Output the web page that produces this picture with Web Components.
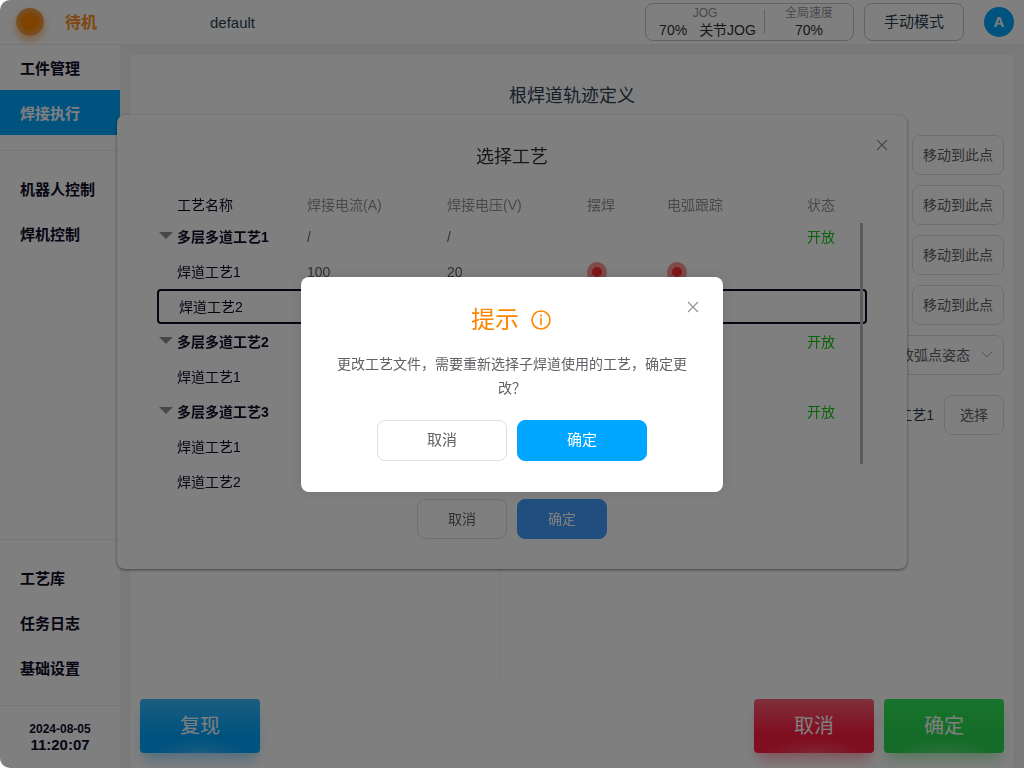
<!DOCTYPE html>
<html lang="zh-CN">
<head>
<meta charset="utf-8">
<title>焊接执行</title>
<style>
  html, body { margin: 0; height: 100%; }
  body {
    background: #fff;
    color: #2c3e50;
    font: 14px/20px "Liberation Sans", "Noto Sans CJK SC", sans-serif;
    overflow: hidden;
  }
</style>
</head>
<body>
<weld-app>
  <top-bar slot="header" state="待机" project="default" user="A"></top-bar>
  <side-nav slot="nav"></side-nav>
  <track-panel heading="根焊道轨迹定义"></track-panel>
  <craft-dialog slot="dialog" heading="选择工艺"></craft-dialog>
  <confirm-dialog slot="prompt" heading="提示">更改工艺文件，需要重新选择子焊道使用的工艺，确定更改？</confirm-dialog>
</weld-app>

<script>
class BaseElement extends HTMLElement {

    constructor(){
        super()
        this.attachShadow({mode : 'open'})
    }

    connectedCallback(){
        const contentNode = document.createElement('template')
        contentNode.innerHTML = `
        <style>
            * { box-sizing: border-box; }
            button, select { font: inherit; color: inherit; margin: 0; cursor: pointer; }
            h1, h2, p { margin: 0; font-weight: normal; }
            ${this.getStyles()}
        </style>
        ${this.getTemplate()}`
        this.shadowRoot.appendChild(contentNode.content.cloneNode(true))
    }
}

class WeldApp extends BaseElement {
    getStyles(){
        return `
            :host {
                display: flex;
                flex-direction: column;
                height: 100vh;
                background: #f2f2f2;
                border-radius: 10px 0 0 10px;
                overflow: hidden;
            }
            .body { display: flex; flex: 1; min-height: 0; }
            main { flex: 1; display: flex; padding: 10px 10px 0; min-width: 0; }
            .layer { position: fixed; inset: 0; display: flex; justify-content: center; }
            .top { align-items: flex-start; padding-top: 15vh; }
            .mask {
                align-items: center;
                background: rgba(0, 0, 0, 0.5);
                border-radius: 10px 0 0 10px;
            }
        `
    }
    getTemplate(){
        return `
            <slot name="header"></slot>
            <div class="body">
                <slot name="nav"></slot>
                <main><slot></slot></main>
            </div>
            <div class="layer top"><slot name="dialog"></slot></div>
            <div class="layer mask"><slot name="prompt"></slot></div>
        `
    }
}

class TopBar extends BaseElement {
    getStyles(){
        return `
            :host {
                display: block;
                background: #fff;
                border-bottom: 1px solid #eee;
            }
            header {
                display: flex;
                align-items: center;
                height: 44px;
                padding: 0 10px 0 16px;
            }
            .lamp {
                width: 28px;
                height: 28px;
                border-radius: 50%;
                background: radial-gradient(circle, #ff8400 7px, #f98f1c 9px, #eda257 14px);
                box-shadow: 0 4px 8px #ffb878;
            }
            .state, .project { padding-top: 2px; }
            .state { width: 145px; margin-left: 21px; font-size: 16px; font-weight: bold; color: #ff8d1a; }
            .project { flex: 1; font-size: 15px; }
            .box {
                display: flex;
                height: 38px;
                border: 1px solid #c4c4cc;
                border-radius: 8px;
                background: none;
            }
            .speed { width: 209px; align-items: center; color: #303133; line-height: 17px; text-align: center; }
            .jog { width: 118px; }
            .jog div { display: flex; gap: 12px; justify-content: center; padding-left: 5px; }
            .global {
                display: flex;
                flex: 1;
                flex-direction: column;
                justify-content: center;
                height: 24px;
                border-left: 1px solid #c0c4cc;
                line-height: 17px;
            }
            small { display: block; font-size: 12px; color: #909399; }
            .mode { width: 100px; margin-left: 10px; align-items: center; justify-content: center; font-size: 15px; }
            .user {
                width: 30px;
                height: 30px;
                margin-left: 20px;
                padding: 0;
                border: 0;
                border-radius: 50%;
                background: #00a6ff;
                color: #fff;
                font-size: 15px;
                font-weight: bold;
            }
        `
    }
    getTemplate(){
        return `
            <header>
                <span class="lamp"></span>
                <span class="state">${this.getAttribute('state')}</span>
                <span class="project">${this.getAttribute('project')}</span>
                <div class="box speed">
                    <div class="jog"><small>JOG</small><div><span>70%</span><span>关节JOG</span></div></div>
                    <div class="global"><small>全局速度</small><span>70%</span></div>
                </div>
                <button class="box mode">手动模式</button>
                <button class="user">${this.getAttribute('user')}</button>
            </header>
        `
    }
}

class SideNav extends BaseElement {
    getStyles(){
        return `
            :host { display: block; flex: none; width: 120px; background: #fff; }
            nav { display: flex; flex-direction: column; height: 100%; }
            .group { padding: 15px 0; border-bottom: 1px solid #eee; }
            .group:first-child { padding-top: 0; }
            .grow { flex: 1; }
            a {
                display: block;
                padding: 2px 0 0 20px;
                font-size: 15px;
                font-weight: bold;
                line-height: 43px;
                color: #0c0c26;
                text-decoration: none;
            }
            a.active { background: #00a6ff; color: #fff; }
            time {
                height: 62px;
                padding-top: 15px;
                text-align: center;
                font-size: 12px;
                font-weight: bold;
                line-height: 16px;
                color: #0c0c26;
            }
            time b { display: block; font-size: 15px; }
        `
    }
    getTemplate(){
        const groups = [
            ['工件管理', '焊接执行'],
            ['机器人控制', '焊机控制'],
            ['工艺库', '任务日志', '基础设置']
        ]
        return `
            <nav>
                ${groups.map((items, i) => `
                <div class="group ${i === 1 ? 'grow' : ''}">
                    ${items.map(item => `<a href="#" class="${item === '焊接执行' ? 'active' : ''}">${item}</a>`).join('')}
                </div>`).join('')}
                <time>2024-08-05<b>11:20:07</b></time>
            </nav>
        `
    }
}

class TrackPanel extends BaseElement {
    getStyles(){
        return `
            :host { display: flex; flex-direction: column; flex: 1; background: #fff; padding: 0 10px 15px; }
            h1 { padding: 31px 0 29px; font-size: 18px; line-height: 20px; text-align: center; }
            .content { display: flex; flex: 1; }
            .view { width: 361px; margin-bottom: 20px; border-right: 1px solid #eee; }
            .points { flex: 1; display: flex; flex-direction: column; align-items: flex-end; gap: 10px; }
            .points button, select {
                height: 40px;
                padding: 0 10px;
                border: 1px solid #dcdfe6;
                border-radius: 8px;
                background: none;
                color: #606266;
            }
            .select { position: relative; }
            select { appearance: none; width: 115px; }
            .select svg { position: absolute; right: 11px; top: 14px; pointer-events: none; }
            .craft { display: flex; align-items: center; gap: 10px; margin-top: 10px; }
            .craft button { width: 60px; }
            footer { display: flex; gap: 10px; }
            footer button {
                width: 120px;
                height: 54px;
                border: 0;
                border-radius: 4px;
                background:
                    radial-gradient(ellipse 50px 14px at 50% 100%, rgba(255, 255, 255, 0.2), transparent),
                    linear-gradient(var(--from), var(--to) 65%);
                box-shadow: 0 10px 12px -4px var(--glow);
                color: #fff;
                font-size: 20px;
            }
            .replay { margin-right: auto; --from: #38b9ff; --to: #00a6ff; --glow: #9fdcff; }
            .cancel { --from: #ff5f78; --to: #ff1c40; --glow: #ffa5b3; }
            .ok { --from: #2fe858; --to: #2ad850; --glow: #aaf0b9; }
        `
    }
    getTemplate(){
        return `
            <h1>${this.getAttribute('heading')}</h1>
            <div class="content">
                <div class="view"></div>
                <div class="points">
                    ${'<button>移动到此点</button>'.repeat(4)}
                    <div class="select">
                        <select aria-label="姿态"><option>收弧点姿态</option></select>
                        <svg width="12" height="12" viewBox="0 0 12 12" fill="none" stroke="#a8abb2"><path d="M1 3l5 5 5-5"/></svg>
                    </div>
                    <div class="craft"><span>工艺1</span><button>选择</button></div>
                </div>
            </div>
            <footer>
                <button class="replay">复现</button>
                <button class="cancel">取消</button>
                <button class="ok">确定</button>
            </footer>
        `
    }
}

// close cross in the corner of both dialogs
class CloseButton extends BaseElement {
    getStyles(){
        return `
            :host { position: absolute; top: 20px; right: 20px; }
            button { display: flex; padding: 4px; border: 0; background: none; }
        `
    }
    getTemplate(){
        return `
            <button aria-label="关闭">
                <svg width="12" height="12" viewBox="0 0 12 12" fill="none" stroke="#909399" stroke-width="1.2"><path d="M1 1l10 10M11 1L1 11"/></svg>
            </button>
        `
    }
}

const dialogButtons = `
    .actions { display: flex; justify-content: center; gap: 10px; }
    .actions button {
        width: 90px;
        height: 40px;
        padding: 0;
        border: 1px solid #dcdfe6;
        border-radius: 8px;
        background: #fff;
        color: #606266;
    }
    .actions .primary { border-color: #409eff; background: #409eff; color: #fff; }
`

class CraftDialog extends BaseElement {
    getStyles(){
        return `
            :host {
                display: block;
                position: relative;
                width: 790px;
                padding: 32px 40px 30px;
                box-sizing: border-box;
                background: #fff;
                border-radius: 8px;
                box-shadow: 0 1px 3px rgba(0, 0, 0, 0.5);
            }
            close-button { right: 15px; }
            h2 { font-size: 18px; line-height: 20px; text-align: center; color: #303133; }
            .list { position: relative; margin-top: 22px; }
            .bar { position: absolute; top: 34px; right: 4px; width: 3px; height: 241px; background: #b8b8b8; }
            table { width: 100%; table-layout: fixed; border-spacing: 0; color: #606266; }
            th, td { height: 35px; padding: 0; text-align: left; font-weight: normal; }
            thead th { height: 30px; padding-top: 2px; color: #909399; }
            th:first-child { padding-left: 20px; color: #0c0c26; }
            .parent th { font-weight: bold; }
            .parent th::before {
                content: '';
                float: left;
                margin: 5px 0 0 -18px;
                border: 7px solid transparent;
                border-top-color: #909090;
                border-bottom: 0;
            }
            tr.selected { outline: 2px solid #0c0c26; outline-offset: -2px; border-radius: 4px; }
            tr.selected th { padding-left: 22px; }
            .open { color: #10c810; }
            .dot {
                display: block;
                width: 20px;
                height: 20px;
                border: 5px solid #ff9494;
                border-radius: 50%;
                background: #ff3030;
            }
            ${dialogButtons}
        `
    }
    getRow(row){
        const dot = row.dots ? '<span class="dot"></span>' : ''
        return `
            <tr class="${row.parent ? 'parent' : ''} ${row.selected ? 'selected' : ''}">
                <th scope="row">${row.name}</th>
                <td>${row.current || ''}</td>
                <td>${row.voltage || ''}</td>
                <td>${dot}</td>
                <td>${dot}</td>
                <td class="open">${row.parent ? '开放' : ''}</td>
            </tr>
        `
    }
    getTemplate(){
        const rows = [
            {name : '多层多道工艺1', parent : true, current : '/', voltage : '/'},
            {name : '焊道工艺1', current : '100', voltage : '20', dots : true},
            {name : '焊道工艺2', selected : true},
            {name : '多层多道工艺2', parent : true},
            {name : '焊道工艺1'},
            {name : '多层多道工艺3', parent : true},
            {name : '焊道工艺1'},
            {name : '焊道工艺2'}
        ]
        return `
            <close-button></close-button>
            <h2>${this.getAttribute('heading')}</h2>
            <div class="list">
                <table>
                    <colgroup><col width="150"><col width="140"><col width="140"><col width="80"><col width="140"><col></colgroup>
                    <thead>
                        <tr><th>工艺名称</th><th>焊接电流(A)</th><th>焊接电压(V)</th><th>摆焊</th><th>电弧跟踪</th><th>状态</th></tr>
                    </thead>
                    <tbody>${rows.map(row => this.getRow(row)).join('')}</tbody>
                </table>
                <div class="bar"></div>
            </div>
            <div class="actions"><button>取消</button><button class="primary">确定</button></div>
        `
    }
}

class ConfirmDialog extends BaseElement {
    getStyles(){
        return `
            :host {
                display: block;
                position: relative;
                width: 422px;
                padding: 28px 35px 31px;
                box-sizing: border-box;
                background: #fff;
                border-radius: 8px;
                box-shadow: 0 0 12px rgba(0, 0, 0, 0.12);
            }
            h2 {
                display: flex;
                align-items: center;
                justify-content: center;
                gap: 12px;
                padding-right: 2px;
                font-size: 24px;
                line-height: 30px;
                color: #ff8400;
            }
            p { margin: 17px 0 20px; line-height: 24px; text-align: center; color: #606266; }
            ${dialogButtons}
            .actions button { width: 130px; height: 41px; font-size: 15px; }
            .actions .primary { border-color: #00a6ff; background: #00a6ff; }
        `
    }
    getTemplate(){
        return `
            <close-button></close-button>
            <h2>${this.getAttribute('heading')}
                <svg width="20" height="20" viewBox="0 0 20 20" fill="none" stroke="#ff8400" stroke-width="1.6">
                    <circle cx="10" cy="10" r="9"/>
                    <path d="M10 8v7"/>
                    <circle cx="10" cy="5.6" r="1.1" fill="#ff8400" stroke="none"/>
                </svg>
            </h2>
            <p><slot></slot></p>
            <div class="actions"><button>取消</button><button class="primary">确定</button></div>
        `
    }
}

customElements.define('close-button', CloseButton)
customElements.define('top-bar', TopBar)
customElements.define('side-nav', SideNav)
customElements.define('track-panel', TrackPanel)
customElements.define('craft-dialog', CraftDialog)
customElements.define('confirm-dialog', ConfirmDialog)
customElements.define('weld-app', WeldApp)
</script>
</body>
</html>
